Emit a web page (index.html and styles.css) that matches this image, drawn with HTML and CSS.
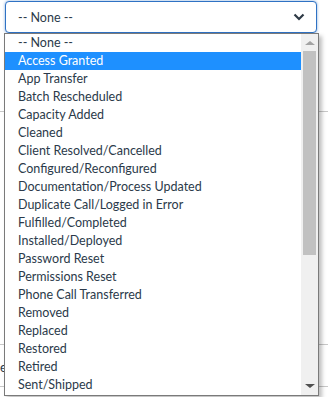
FILE: index.html
```html
<!DOCTYPE html>
<html lang="en">
<head>
    <meta charset="UTF-8">
    <title>Resolution Code</title>
    <link rel="stylesheet" href="styles.css">
</head>
<body>

<!-- page behind the open dropdown -->
<div class="page">
    <div class="band-top"></div>
    <div class="band-mid"></div>
    <div class="band-row"><span class="cut-label">e</span></div>
</div>

<!-- Select field -->
<div class="select-box">
    <span class="select-value">-- None --</span>
    <svg class="chevron" width="12" height="8" viewBox="0 0 12 8">
        <path d="M1.5 1.5 L6 6 L10.5 1.5" fill="none" stroke="#2e3a46" stroke-width="2.2"/>
    </svg>
</div>

<!-- Open option list -->
<div class="listbox">
    <div class="options">
        <div class="option">-- None --</div>
        <div class="option selected">Access Granted</div>
        <div class="option">App Transfer</div>
        <div class="option">Batch Rescheduled</div>
        <div class="option">Capacity Added</div>
        <div class="option">Cleaned</div>
        <div class="option">Client Resolved/Cancelled</div>
        <div class="option">Configured/Reconfigured</div>
        <div class="option">Documentation/Process Updated</div>
        <div class="option">Duplicate Call/Logged in Error</div>
        <div class="option">Fulfilled/Completed</div>
        <div class="option">Installed/Deployed</div>
        <div class="option">Password Reset</div>
        <div class="option">Permissions Reset</div>
        <div class="option">Phone Call Transferred</div>
        <div class="option">Removed</div>
        <div class="option">Replaced</div>
        <div class="option">Restored</div>
        <div class="option">Retired</div>
        <div class="option">Sent/Shipped</div>
    </div>
    <div class="scrollbar">
        <div class="arrow-up"></div>
        <div class="thumb"></div>
        <div class="track-rest"></div>
        <div class="arrow-down"></div>
    </div>
</div>

</body>
</html>
```

FILE: styles.css
```css
body {
    margin: 0;
    padding: 0;
    background-color: #ffffff;
    font-family: "Lato", "Open Sans", sans-serif;
    color: #2b3a4a;
    width: 328px;
    height: 397px;
    overflow: hidden;
    position: relative;
}

.page {
    width: 328px;
}

.band-top {
    height: 111px;
    border-bottom: 1px solid #c8c8c8;
}

.band-mid {
    height: 232px;
    border-bottom: 1px solid #c8c8c8;
}

.band-row {
    height: 41px;
    border-bottom: 1px solid #c8c8c8;
    display: flex;
    align-items: center;
}

.cut-label {
    font-size: 13px;
    margin-left: 0;
    margin-top: 2px;
}

.select-box {
    position: absolute;
    left: 5px;
    top: 1px;
    width: 312px;
    height: 32px;
    border: 1px solid #2f72c4;
    border-radius: 4px;
    box-shadow: 0 0 3px rgba(47, 114, 196, 0.6);
    background-color: #ffffff;
    display: flex;
    align-items: center;
    justify-content: space-between;
    padding: 0 11px 0 12px;
    box-sizing: border-box;
}

.select-value {
    font-size: 12.5px;
}

.chevron {
    display: block;
}

.listbox {
    position: absolute;
    left: 4px;
    top: 33px;
    width: 313px;
    height: 361px;
    border: 1px solid #7a7a7a;
    background-color: #ffffff;
    box-shadow: 3px 3px 4px rgba(0, 0, 0, 0.25);
    display: flex;
}

.options {
    flex: 1;
    overflow: hidden;
}

.option {
    height: 18px;
    line-height: 18px;
    padding-left: 13px;
    font-size: 12.5px;
    white-space: nowrap;
}

.option.selected {
    background-color: #1e90ff;
    color: #ffffff;
}

.scrollbar {
    width: 17px;
    background-color: #f0f0f0;
    display: flex;
    flex-direction: column;
    align-items: center;
}

.arrow-up {
    margin-top: 7px;
    margin-bottom: 6px;
    width: 0;
    height: 0;
    border-left: 5px solid transparent;
    border-right: 5px solid transparent;
    border-bottom: 4px solid #a3a3a3;
}

.thumb {
    width: 13px;
    height: 204px;
    background-color: #c1c1c1;
}

.track-rest {
    flex: 1;
}

.arrow-down {
    margin-bottom: 7px;
    width: 0;
    height: 0;
    border-left: 5px solid transparent;
    border-right: 5px solid transparent;
    border-top: 4px solid #505050;
}
```
